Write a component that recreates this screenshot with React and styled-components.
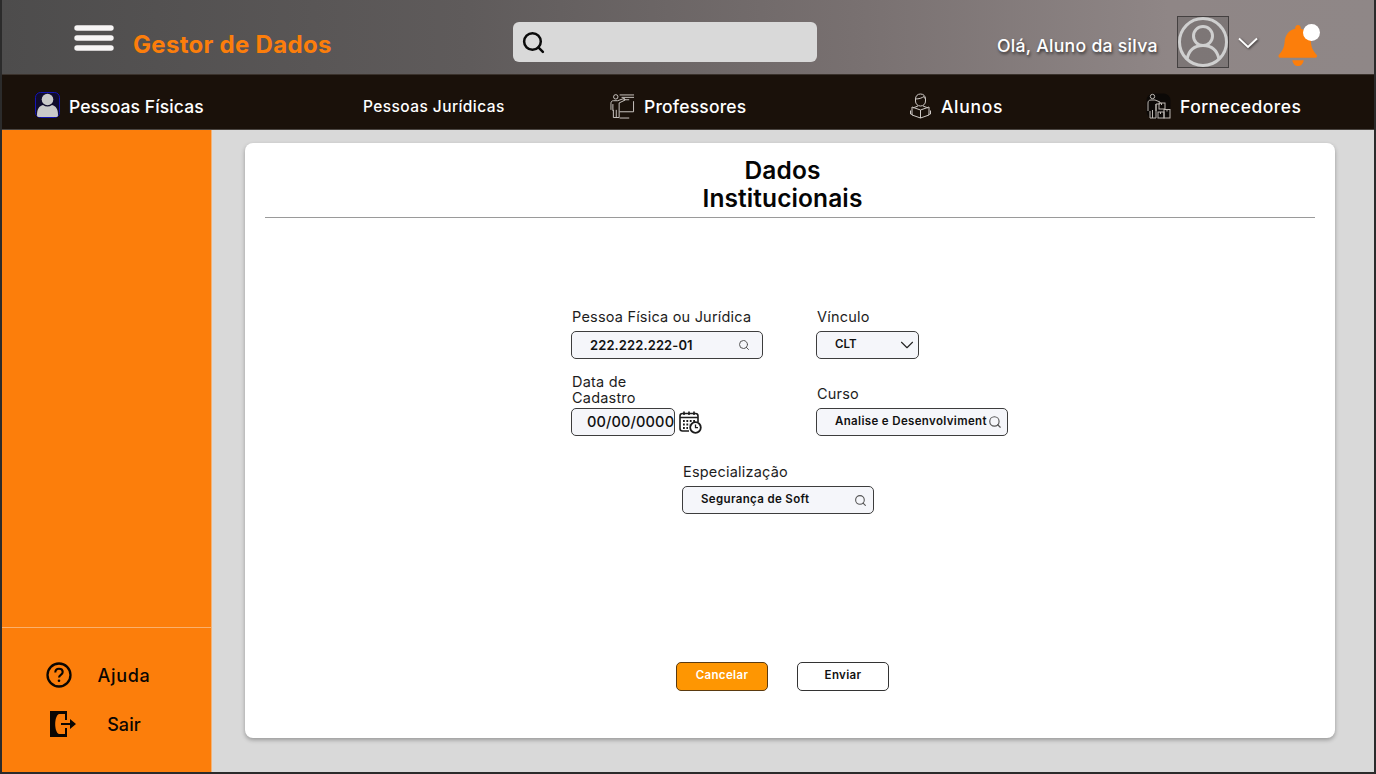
import React from 'react';
import styled, { createGlobalStyle } from 'styled-components';
import { ChevronDown, Search } from 'lucide-react';

const GlobalStyle = createGlobalStyle`
  html, body {
    margin: 0;
    padding: 0;
    background: #d9d9d9;
  }
  * {
    box-sizing: border-box;
  }
`;

const HamburgerIcon = () => (
  <svg width='40' height='26' viewBox='0 0 40 26'>
    <g stroke='#f7f5f5' strokeWidth='5.4' strokeLinecap='round'>
      <path d='M3 3H37' />
      <path d='M3 13H37' />
      <path d='M3 23H37' />
    </g>
  </svg>
);

const AvatarIcon = () => (
  <svg width='50' height='50' viewBox='0 0 50 50' fill='none' stroke='#cfcfcf' strokeWidth='3'>
    <circle cx='25' cy='25' r='23.5' />
    <circle cx='25' cy='19' r='9.5' />
    <path d='M9 42c2-9 8-13.500 16-13.500S39 33 41 42' />
  </svg>
);

const ThinChevron = () => (
  <svg width='20' height='12' viewBox='0 0 20 12' fill='none' stroke='#ffffff' strokeWidth='1.8'>
    <path d='M1 1.500l9 8.500 9-8.500' />
  </svg>
);

const BellIcon = () => (
  <svg width='40' height='43' viewBox='0 0 42 44' preserveAspectRatio='none'>
    <path fill='#fc7e0b' d='M21 2c2 0 3 1.500 3 4 7 1.500 10 7 10.500 13 .5 6 2 9.500 6 13.500 1 1 .5 3-1 3H2c-1.500 0-2-2-1-3 4-4 5.500-7.500 6-13.500C7.500 13 11 7.500 18 6c0-2.500 1-4 3-4z' />
    <path fill='#fc7e0b' d='M15 38h12c-.5 3.500-3 6-6 6s-5.500-2.500-6-6z' />
  </svg>
);

const PersonIcon = () => (
  <PersonSvg width='25' height='26' viewBox='0 0 25 26'>
    <rect x='.5' y='.5' width='24' height='25' rx='5' fill='#100c2c' stroke='#1414b4' />
    <circle cx='12.500' cy='7.500' r='5.800' fill='#c9c9c9' />
    <path fill='#c9c9c9' d='M2 23c0-6 2-9 6-10 3 2 6 2 9 0 4 1 6 4 6 10 0 1-.5 2-1.500 2h-18C2.500 25 2 24 2 23z' />
  </PersonSvg>
);

const TeacherIcon = () => (
  <svg width='25' height='26' viewBox='0 0 26 26' fill='none' stroke='#cfcac6' strokeWidth='1'>
    <circle cx='6' cy='3.500' r='2.300' />
    <path d='M10 1.500H25M12 4H25M14 6.500H20' />
    <path d='M1 17V10c0-1.500 1-2.500 2.500-2.500H8l7-2.500.7 1.800-6.200 3V25H3.500V17' />
    <path d='M3 11v7M6.500 17v8' />
    <path d='M24.500 8v11H10M10 25.500H20' />
  </svg>
);

const StudentIcon = () => (
  <svg width='23' height='26' viewBox='0 0 22 26' fill='none' stroke='#cfcac6' strokeWidth='1'>
    <path d='M6 6c0-3 2-5 5-5s5 2 5 5v2c0 3-2 5-5 5s-5-2-5-5z' />
    <path d='M6 6c3 0 7-1 8-2.500 .5 1.200 1.200 2 2 2.500' />
    <path d='M3.500 15c2-1 4-1.500 5-2M18.500 15c-2-1-4-1.500-5-2' />
    <path d='M11 17l-8.500-3v8L11 25l8.500-3v-8z' />
    <path d='M11 17v8M1 17.500v3.500c1 .5 2 .5 2 0M21 17.500v3.500c-1 .5-2 .5-2 0' />
  </svg>
);

const SupplierIcon = () => (
  <svg width='25' height='26' viewBox='0 0 25 26'>
    <rect x='.5' y='.5' width='24' height='25' rx='7' fill='#0c0907' />
    <g fill='none' stroke='#bdb8b3' strokeWidth='1'>
      <circle cx='6.500' cy='3.500' r='2.200' />
      <path d='M2 18v-8c0-2 1-3 3-3h4l5 2v2H10v14H4v-7M6.500 17v8M10 18V11' />
      <rect x='13' y='10' width='6' height='6' />
      <rect x='12' y='19' width='6' height='6' />
      <rect x='18' y='16.500' width='6' height='8.500' />
      <path d='M15.500 10v2M21 16.500v2M14.500 19v2' />
    </g>
  </svg>
);

const HelpIcon = () => (
  <svg width='26' height='26' viewBox='0 0 26 26' fill='none' stroke='#0a0603' strokeWidth='2.300'>
    <circle cx='13' cy='13' r='11.500' />
    <path strokeWidth='2.100' d='M9.300 10.500c0-2.300 1.600-3.700 3.700-3.700s3.700 1.300 3.700 3.200c0 2.800-3.700 2.800-3.700 5.500' />
    <circle cx='13' cy='18.700' r='1.300' fill='#0a0603' stroke='none' />
  </svg>
);

const ExitIcon = () => (
  <ExitSvg width='26' height='26' viewBox='0 0 26 26'>
    <path fill='#0a0603' d='M0 0h17v9h-2V3H9C4 5 4 21 9 23h6v-6h2v9H0z' />
    <path fill='#0a0603' d='M11 12h9V8l6 5-6 5v-4h-9z' />
  </ExitSvg>
);

const CalendarIcon = () => (
  <svg width='23' height='23' viewBox='0 0 23 23' fill='none' stroke='#1c1c1c'>
    <path strokeWidth='1.600' d='M10 20H3.500C2 20 1 19 1 17.500V5c0-1.500 1-2.500 2.500-2.500h13C18 2.500 19 3.500 19 5v6' />
    <path strokeWidth='1.600' d='M1 6.500H19M5 .5V4M10 .5V4M15 .5V4' />
    <path strokeWidth='1.800' strokeDasharray='1.800 1.600' d='M4 10H16M4 13.500H11M4 17H9' />
    <circle cx='16.500' cy='16.500' r='5.300' strokeWidth='1.800' />
    <path strokeWidth='1.300' d='M16.500 13.500v3.200h2.500' />
  </svg>
);

const Field = ({ label, children, shifted, compact }) => (
  <FieldBox $shifted={shifted}>
    <FieldLabel $compact={compact}>{label}</FieldLabel>
    {children}
  </FieldBox>
);

const navItems = [
  { title: 'Pessoas Físicas', icon: <PersonIcon />, size: 17.5, spacing: 0.1 },
  { title: 'Pessoas Jurídicas', size: 15.5, spacing: 0.42 },
  { title: 'Professores', icon: <TeacherIcon />, size: 17.5, spacing: 0.2 },
  { title: 'Alunos', icon: <StudentIcon />, size: 17.5, spacing: 0.7 },
  { title: 'Fornecedores', icon: <SupplierIcon />, size: 17.5, spacing: 0.45 },
];

const App = () => {
  return (
    <Page>
      <GlobalStyle />
      <Header>
        <Brand>
          <HamburgerIcon />
          <BrandName>Gestor de Dados</BrandName>
        </Brand>
        <SearchBar>
          <Search size={25} color='#0a0a0a' strokeWidth={2.4} />
        </SearchBar>
        <UserArea>
          <Greeting>Olá, Aluno da silva</Greeting>
          <AvatarBox>
            <AvatarIcon />
          </AvatarBox>
          <UserChevron>
            <ThinChevron />
          </UserChevron>
          <BellBox>
            <BellIcon />
            <BellDot />
          </BellBox>
        </UserArea>
      </Header>

      <Nav>
        {navItems.map((item) => (
          <NavItem key={item.title}>
            {item.icon}
            <NavLabel $size={item.size} $spacing={item.spacing}>{item.title}</NavLabel>
          </NavItem>
        ))}
      </Nav>

      <Body>
        <Sidebar>
          <SidebarFooter>
            <FooterRow>
              <HelpIcon />
              <FooterLabel $spacing={0.7}>Ajuda</FooterLabel>
            </FooterRow>
            <FooterRow>
              <ExitIcon />
              <FooterLabel $spacing={0.1}>Sair</FooterLabel>
            </FooterRow>
          </SidebarFooter>
        </Sidebar>

        <Main>
          <Card>
            <Title>Dados<br />Institucionais</Title>
            <Divider />
            <FormGrid>
              <Field label='Pessoa Física ou Jurídica'>
                <InputBox $padRight={12}>
                  <InputValue $size={13}>222.222.222-01</InputValue>
                  <Search size={12} color='#555555' />
                </InputBox>
              </Field>
              <Field label='Vínculo'>
                <InputBox $width={103} $padRight={0}>
                  <InputValue $raised>CLT</InputValue>
                  <ChevronDown size={22} color='#222222' strokeWidth={1.2} />
                </InputBox>
              </Field>
              <Field label={<>Data de<br />Cadastro</>} compact>
                <DateRow>
                  <InputBox $width={104} $padLeft={15} $padRight={0}>
                    <InputValue $size={14.6} $weight={500}>00/00/0000</InputValue>
                  </InputBox>
                  <CalendarIcon />
                </DateRow>
              </Field>
              <Field label='Curso'>
                <InputBox $padRight={5}>
                  <InputValue $raised $spacing={0.35}>Analise e Desenvolviment</InputValue>
                  <Search size={14} color='#555555' />
                </InputBox>
              </Field>
              <Field label='Especialização' shifted>
                <InputBox $padRight={6}>
                  <InputValue $raised $spacing={0.35}>Segurança de Soft</InputValue>
                  <Search size={13} color='#555555' />
                </InputBox>
              </Field>
            </FormGrid>
            <Actions>
              <ActionButton $primary>Cancelar</ActionButton>
              <ActionButton>Enviar</ActionButton>
            </Actions>
          </Card>
        </Main>
      </Body>
    </Page>
  );
};

const Page = styled.div`
  display: flex;
  flex-direction: column;
  width: 1376px;
  height: 774px;
  overflow: hidden;
  border-left: 2px solid #2b2b2b;
  border-right: 2px solid #2b2b2b;
  border-bottom: 2px solid #2b2b2b;
  font-family: Inter, 'Open Sans', sans-serif;
`;

const Header = styled.header`
  display: flex;
  align-items: center;
  flex: 0 0 74px;
  padding: 10px 0 0 72px;
  background: linear-gradient(90deg, #4d4c4c 0%, #5f5b5b 34%, #787070 62%, #8f8686 85%, #8f8787 100%);
`;

const Brand = styled.div`
  display: flex;
  align-items: flex-start;
  gap: 20px;
  width: 439px;
  height: 40px;
  padding-top: 3px;
`;

const BrandName = styled.div`
  margin: 5px 0 0 -1px;
  color: #fc7e0b;
  font-size: 24px;
  line-height: 30px;
  font-weight: 700;
  letter-spacing: 0.3px;
  white-space: nowrap;
`;

const SearchBar = styled.div`
  display: flex;
  align-items: center;
  width: 304px;
  height: 40px;
  padding-left: 8px;
  border-radius: 6px;
  background: #d9d9d9;
`;

const UserArea = styled.div`
  display: flex;
  align-items: center;
  margin-left: 180px;
`;

const Greeting = styled.div`
  width: 180px;
  margin-top: 6px;
  color: #ffffff;
  font-size: 17.7px;
  font-weight: 500;
  letter-spacing: 0.25px;
  text-shadow: 1px 2px 3px rgba(0, 0, 0, 0.6);
  white-space: nowrap;
`;

const AvatarBox = styled.div`
  display: flex;
  align-items: center;
  justify-content: center;
  width: 52px;
  height: 52px;
  border: 1px solid #444040;
  background: rgba(70, 70, 70, 0.25);
`;

const UserChevron = styled.div`
  display: flex;
  width: 49px;
  padding: 2px 0 0 9px;
  filter: drop-shadow(1px 1px 1px rgba(0, 0, 0, 0.6));
`;

const BellBox = styled.div`
  position: relative;
  display: flex;
  margin-top: 4px;
`;

const BellDot = styled.span`
  position: absolute;
  top: 1px;
  right: -2px;
  width: 17px;
  height: 17px;
  border-radius: 50%;
  background: #ffffff;
`;

const Nav = styled.nav`
  display: grid;
  grid-template-columns: 328px 247px 299px 237px 1fr;
  align-items: center;
  flex: 0 0 56px;
  padding: 8px 0 0 33px;
  background: #1a110a;
  border-top: 1px solid #3a322c;
  border-bottom: 1px solid #4a4541;
`;

const NavItem = styled.div`
  display: flex;
  align-items: center;
  gap: 9px;
`;

const PersonSvg = styled.svg`
  margin-top: -2px;
`;

const NavLabel = styled.span`
  color: #ffffff;
  font-size: ${(props) => props.$size}px;
  font-weight: 500;
  letter-spacing: ${(props) => props.$spacing}px;
  white-space: nowrap;
`;

const Body = styled.div`
  display: flex;
  flex: 1;
  min-height: 0;
`;

const Sidebar = styled.aside`
  display: flex;
  flex-direction: column;
  justify-content: flex-end;
  width: 210px;
  background: #fc7e0b;
  border-right: 1px solid #f3b377;
`;

const SidebarFooter = styled.div`
  display: flex;
  flex-direction: column;
  gap: 23px;
  height: 145px;
  padding: 34px 0 0 44px;
  border-top: 1px solid #fbb06c;
`;

const FooterRow = styled.div`
  display: grid;
  grid-template-columns: 26px 104px;
  align-items: center;
  height: 26px;
`;

const ExitSvg = styled.svg`
  margin-left: 4px;
`;

const FooterLabel = styled.span`
  color: #0a0603;
  font-size: 18px;
  font-weight: 500;
  letter-spacing: ${(props) => props.$spacing}px;
  text-align: center;
`;

const Main = styled.main`
  flex: 1;
  padding: 13px 39px 34px 33px;
  background: #d9d9d9;
`;

const Card = styled.section`
  display: flex;
  flex-direction: column;
  height: 100%;
  padding: 13px 20px 0;
  border-radius: 8px;
  background: #ffffff;
  box-shadow: 0 2px 4px rgba(0, 0, 0, 0.3);
`;

const Title = styled.h1`
  margin: 0;
  padding-right: 15px;
  color: #050505;
  font-size: 24.5px;
  line-height: 28px;
  font-weight: 600;
  letter-spacing: 0.1px;
  text-align: center;
`;

const Divider = styled.div`
  flex: none;
  height: 1px;
  margin-top: 5px;
  background: #9a9a9a;
`;

const FormGrid = styled.div`
  display: grid;
  grid-template-columns: 245px 192px;
  row-gap: 15px;
  align-self: center;
  margin: 91px 1px 0 0;
`;

const FieldBox = styled.div`
  display: flex;
  flex-direction: column;
  justify-content: flex-end;
  align-items: flex-start;
  grid-column: ${(props) => (props.$shifted ? '1 / 3' : 'auto')};
  margin-left: ${(props) => (props.$shifted ? '111px' : '0')};
  margin-top: ${(props) => (props.$shifted ? '13px' : '0')};
`;

const FieldLabel = styled.label`
  margin: 0 0 ${(props) => (props.$compact ? '2px' : '6px')} 1px;
  color: #1d1d1d;
  font-size: 14.5px;
  line-height: 16px;
  letter-spacing: 0.2px;
`;

const InputBox = styled.div`
  display: flex;
  align-items: center;
  justify-content: space-between;
  width: ${(props) => props.$width || 192}px;
  height: 28px;
  padding: 0 ${(props) => props.$padRight}px 0 ${(props) => props.$padLeft || 18}px;
  border: 1px solid #3d3d3d;
  border-radius: 5px;
  background: #f5f6fa;

  svg {
    flex: none;
  }
`;

const InputValue = styled.span`
  margin-bottom: ${(props) => (props.$raised ? '3px' : '0')};
  color: #111111;
  font-size: ${(props) => props.$size || 11.5}px;
  font-weight: ${(props) => props.$weight || 600};
  letter-spacing: ${(props) => props.$spacing || 0.1}px;
  white-space: nowrap;
`;

const DateRow = styled.div`
  display: flex;
  align-items: center;
  gap: 4px;
`;

const Actions = styled.div`
  display: flex;
  justify-content: center;
  gap: 29px;
  padding-right: 15px;
  margin-top: 148px;
`;

const ActionButton = styled.button`
  width: 92px;
  height: 29px;
  padding: 0 0 3px;
  border: 1px solid ${(props) => (props.$primary ? '#5a3a10' : '#333333')};
  border-radius: 5px;
  background: ${(props) => (props.$primary ? '#fe9602' : '#ffffff')};
  color: ${(props) => (props.$primary ? '#ffffff' : '#111111')};
  font-family: inherit;
  font-size: 11.5px;
  font-weight: 600;
  letter-spacing: 0.35px;
`;

export default App;
